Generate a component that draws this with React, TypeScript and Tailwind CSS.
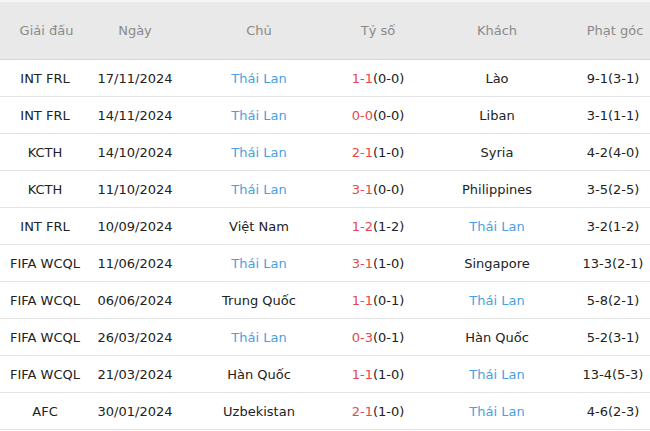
const rows = [
  { league: "INT FRL", date: "17/11/2024", home: "Thái Lan", ft: "1-1", ht: "(0-0)", away: "Lào", corners: "9-1(3-1)" },
  { league: "INT FRL", date: "14/11/2024", home: "Thái Lan", ft: "0-0", ht: "(0-0)", away: "Liban", corners: "3-1(1-1)" },
  { league: "KCTH", date: "14/10/2024", home: "Thái Lan", ft: "2-1", ht: "(1-0)", away: "Syria", corners: "4-2(4-0)" },
  { league: "KCTH", date: "11/10/2024", home: "Thái Lan", ft: "3-1", ht: "(0-0)", away: "Philippines", corners: "3-5(2-5)" },
  { league: "INT FRL", date: "10/09/2024", home: "Việt Nam", ft: "1-2", ht: "(1-2)", away: "Thái Lan", corners: "3-2(1-2)" },
  { league: "FIFA WCQL", date: "11/06/2024", home: "Thái Lan", ft: "3-1", ht: "(1-0)", away: "Singapore", corners: "13-3(2-1)" },
  { league: "FIFA WCQL", date: "06/06/2024", home: "Trung Quốc", ft: "1-1", ht: "(0-1)", away: "Thái Lan", corners: "5-8(2-1)" },
  { league: "FIFA WCQL", date: "26/03/2024", home: "Thái Lan", ft: "0-3", ht: "(0-1)", away: "Hàn Quốc", corners: "5-2(3-1)" },
  { league: "FIFA WCQL", date: "21/03/2024", home: "Hàn Quốc", ft: "1-1", ht: "(1-0)", away: "Thái Lan", corners: "13-4(5-3)" },
  { league: "AFC", date: "30/01/2024", home: "Uzbekistan", ft: "2-1", ht: "(1-0)", away: "Thái Lan", corners: "4-6(2-3)" },
];

const TEAM = "Thái Lan";

function Team({ name }: { name: string }) {
  return <span className={name === TEAM ? "text-[#4a9fe0]" : "text-[#222]"}>{name}</span>;
}

export default function App() {
  return (
    <div className="w-[650px] h-[431px] overflow-hidden bg-white font-['Tahoma','DejaVu_Sans',sans-serif] text-[13px]">
      <div className="h-[2px] bg-[#f4f4f4]" />
      <div className="grid grid-cols-[90px_90px_158px_80px_158px_74px] h-[58px] items-center bg-[#e9e9e9] border-b border-[#d6d6d6] text-[#8a8a8a] text-center">
        <div className="pl-[3px]">Giải đấu</div>
        <div>Ngày</div>
        <div>Chủ</div>
        <div>Tỷ số</div>
        <div>Khách</div>
        <div className="pl-[4px]">Phạt góc</div>
      </div>
      {rows.map((r, i) => (
        <div
          key={i}
          className="grid grid-cols-[90px_90px_158px_80px_158px_74px] h-[37px] pt-[2px] items-center border-b border-[#e3e3e3] text-[#222] text-center"
        >
          <div>{r.league}</div>
          <div>{r.date}</div>
          <div>
            <Team name={r.home} />
          </div>
          <div>
            <span className="text-[#e8474f]">{r.ft}</span>
            {r.ht}
          </div>
          <div>
            <Team name={r.away} />
          </div>
          <div>{r.corners}</div>
        </div>
      ))}
    </div>
  );
}
